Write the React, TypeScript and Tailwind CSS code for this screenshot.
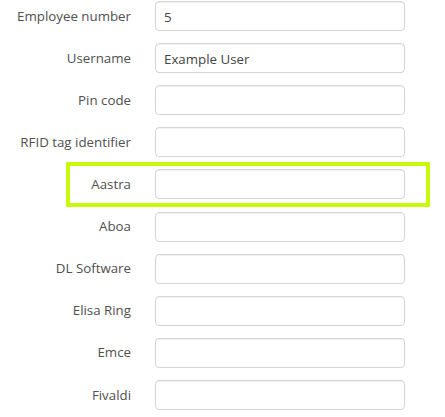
import React from "react";

type Field = { label: string; value?: string; highlight?: boolean };

const FIELDS: Field[] = [
  { label: "Employee number", value: "5" },
  { label: "Username", value: "Example User" },
  { label: "Pin code" },
  { label: "RFID tag identifier" },
  { label: "Aastra", highlight: true },
  { label: "Aboa" },
  { label: "DL Software" },
  { label: "Elisa Ring" },
  { label: "Emce" },
  { label: "Fivaldi" },
];

function FieldRow({ field }: { field: Field }) {
  return (
    <div className="relative flex items-center">
      {/* lime highlight drawn over the row */}
      {field.highlight && (
        <div className="pointer-events-none absolute left-[66px] top-[-7.5px] h-[45px] w-[364px] border-4 border-[#c6fa0a]" />
      )}
      <label className="w-[131px] shrink-0 pt-[1px] text-right text-[13.3px] text-[#505050]">
        {field.label}
      </label>
      <input
        type="text"
        defaultValue={field.value ?? ""}
        className="ml-[24px] h-[30px] w-[250px] rounded-[4px] border border-[#d5d5d5] bg-white px-2 pt-[1px] text-[13.3px] text-[#444] shadow-[inset_0_1px_1px_rgba(0,0,0,0.06)] outline-none"
        style={{ fontFamily: '"Open Sans", sans-serif' }}
      />
    </div>
  );
}

export default function App() {
  return (
    <div
      className="h-[417px] w-[445px] overflow-hidden bg-white pt-[1px]"
      style={{ fontFamily: '"Open Sans", sans-serif' }}
    >
      <div className="flex flex-col gap-[12.11px]">
        {FIELDS.map((f) => (
          <FieldRow key={f.label} field={f} />
        ))}
      </div>
    </div>
  );
}
